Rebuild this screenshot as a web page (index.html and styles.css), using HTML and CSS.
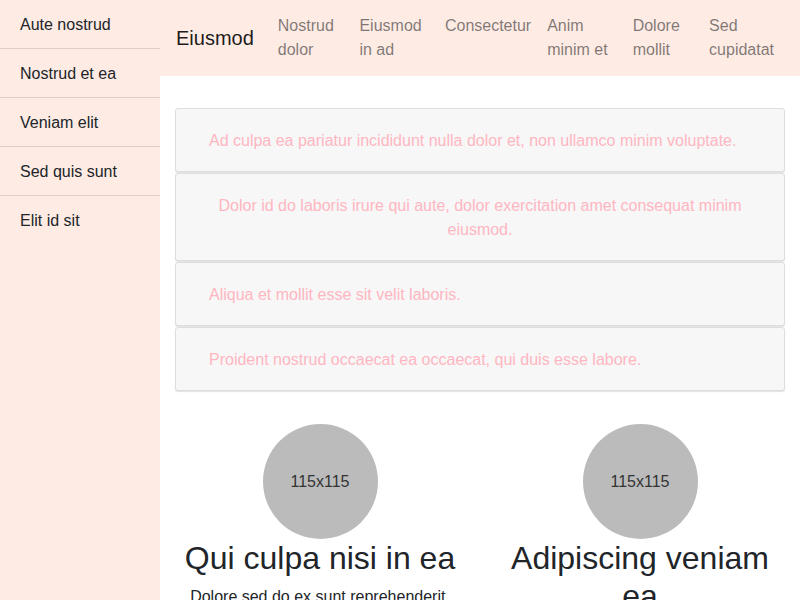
FILE: index.html
```html
<!DOCTYPE html>
<html lang="en">
<head>
<meta charset="utf-8">
<title>Eiusmod</title>
<link rel="stylesheet" href="styles.css">
</head>
<body>
<div class="layout">
  <aside class="sidebar">
    <a class="side-item" href="#">Aute nostrud</a>
    <a class="side-item" href="#">Nostrud et ea</a>
    <a class="side-item" href="#">Veniam elit</a>
    <a class="side-item" href="#">Sed quis sunt</a>
    <a class="side-item" href="#">Elit id sit</a>
  </aside>
  <div class="main">
    <nav class="navbar">
      <a class="brand" href="#">Eiusmod</a>
      <ul class="nav">
        <li><a class="nav-link" href="#">Nostrud dolor</a></li>
        <li><a class="nav-link" href="#">Eiusmod in ad</a></li>
        <li><a class="nav-link" href="#">Consectetur</a></li>
        <li><a class="nav-link" href="#">Anim minim et</a></li>
        <li><a class="nav-link" href="#">Dolore mollit</a></li>
        <li><a class="nav-link" href="#">Sed cupidatat</a></li>
      </ul>
    </nav>
    <div class="container">
      <div class="cards">
        <div class="card">Ad culpa ea pariatur incididunt nulla dolor et, non ullamco minim voluptate.</div>
        <div class="card card-center">Dolor id do laboris irure qui aute, dolor exercitation amet consequat minim eiusmod.</div>
        <div class="card">Aliqua et mollit esse sit velit laboris.</div>
        <div class="card">Proident nostrud occaecat ea occaecat, qui duis esse labore.</div>
      </div>
      <div class="row">
        <div class="col">
          <div class="avatar">115x115</div>
          <h2 class="title">Qui culpa nisi in ea</h2>
          <p class="desc">Dolore sed do ex sunt reprehenderit.</p>
        </div>
        <div class="col">
          <div class="avatar">115x115</div>
          <h2 class="title">Adipiscing veniam ea</h2>
          <p class="desc">Lorem sint culpa elit aliqua.</p>
        </div>
      </div>
    </div>
  </div>
</div>
</body>
</html>
```
FILE: styles.css
```css
* { box-sizing: border-box; }
html, body { margin: 0; padding: 0; }
body {
  font-family: "Liberation Sans", Arial, sans-serif;
  font-size: 16px;
  line-height: 24px;
  color: #212529;
  background: #fff;
}
a { text-decoration: none; }

.layout {
  display: flex;
  min-height: 100vh;
}

.sidebar {
  width: 160px;
  flex: 0 0 160px;
  background: #fdebe4;
  display: flex;
  flex-direction: column;
}
.side-item {
  display: block;
  padding: 13px 20px 11px;
  color: #212529;
  border-bottom: 1px solid #ddd0cb;
}
.side-item:last-child { border-bottom: none; }

.main {
  flex: 1 1 auto;
  min-width: 0;
}

.navbar {
  display: flex;
  align-items: center;
  background: #fdebe4;
  padding: 6px 16px;
  height: 76px;
}
.brand {
  font-size: 20px;
  line-height: 30px;
  color: rgba(0, 0, 0, 0.9);
  margin-right: 16px;
  white-space: nowrap;
  flex: 0 0 auto;
}
.nav {
  display: flex;
  list-style: none;
  margin: 0;
  padding: 0;
  flex: 1 1 auto;
  min-width: 0;
}
.nav li { flex: 0 1 auto; }
.nav-link {
  display: block;
  padding: 8px;
  color: rgba(0, 0, 0, 0.5);
}

.container {
  padding: 32px 15px 0;
}
.cards {
  display: flex;
  flex-direction: column;
  gap: 1px;
}
.card {
  background: #f7f7f7;
  border: 1px solid #dedede;
  border-radius: 3px;
  box-shadow: 0 1px 1px rgba(0, 0, 0, 0.12);
  padding: 20px 33px 18px;
  color: #ffb6c1;
}
.card-center { text-align: center; }

.row {
  display: flex;
  margin: 33px -15px 0;
}
.col {
  flex: 1 1 50%;
  padding: 0 15px;
  text-align: center;
}
.avatar {
  width: 115px;
  height: 115px;
  border-radius: 50%;
  background: #bbbbbb;
  color: #333;
  display: flex;
  align-items: center;
  justify-content: center;
  margin: 0 auto;
}
.title {
  font-size: 32px;
  font-weight: 500;
  line-height: 38.4px;
  margin: 0 0 8px;
}
.desc {
  margin: 0 0 16px;
}
```
